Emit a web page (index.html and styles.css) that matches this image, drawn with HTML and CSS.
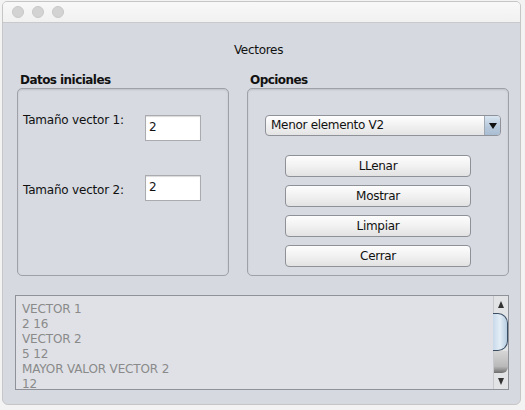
FILE: index.html
```html
<!DOCTYPE html>
<html lang="es">
<head>
<meta charset="utf-8">
<title>Vectores</title>
<link rel="stylesheet" href="styles.css">
</head>
<body>
<div class="window">
  <div class="titlebar">
    <span class="light"></span><span class="light"></span><span class="light"></span>
  </div>
  <div class="content">
    <div class="heading">Vectores</div>
    <div class="panels">
      <section class="group group-left">
        <h2 class="group-title">Datos iniciales</h2>
        <div class="box box-left">
          <div class="field field-a">
            <label class="field-label">Tamaño vector 1:</label>
            <div class="input">2</div>
          </div>
          <div class="field field-b">
            <label class="field-label">Tamaño vector 2:</label>
            <div class="input">2</div>
          </div>
        </div>
      </section>
      <section class="group group-right">
        <h2 class="group-title">Opciones</h2>
        <div class="box box-right">
          <div class="combo">
            <span class="combo-text">Menor elemento V2</span>
            <span class="combo-arrow"><span class="tri-down"></span></span>
          </div>
          <div class="buttons">
            <div class="btn">LLenar</div>
            <div class="btn">Mostrar</div>
            <div class="btn">Limpiar</div>
            <div class="btn">Cerrar</div>
          </div>
        </div>
      </section>
    </div>
    <div class="output">
      <div class="output-text">
        <div>VECTOR 1</div>
        <div>2 16</div>
        <div>VECTOR 2</div>
        <div>5 12</div>
        <div>MAYOR VALOR VECTOR 2</div>
        <div>12</div>
      </div>
      <div class="scrollbar">
        <div class="sb-up"><span class="tri-up"></span></div>
        <div class="sb-thumb"></div>
        <div class="sb-track"></div>
        <div class="sb-down"><span class="tri-down small"></span></div>
      </div>
    </div>
  </div>
</div>
</body>
</html>
```

FILE: styles.css
```css
* { box-sizing: border-box; }
html, body { margin: 0; padding: 0; }
body {
  width: 525px;
  height: 410px;
  background: #f3f3f3;
  font-family: "DejaVu Sans", "Liberation Sans", sans-serif;
  font-size: 12px;
  letter-spacing: -0.3px;
  color: #111;
  overflow: hidden;
  padding: 1px 0 0 2px;
}
.window {
  width: 519px;
  height: 404px;
  border: 1px solid #c6c6c6;
  border-radius: 5px 5px 6px 6px;
  background: #d6d9e0;
  display: flex;
  flex-direction: column;
  overflow: hidden;
}
.titlebar {
  height: 21px;
  flex: none;
  background: linear-gradient(#f8f8f8, #f1f1f1);
  border-bottom: 1px solid #c9c9c9;
  display: flex;
  align-items: center;
  gap: 8px;
  padding-left: 9px;
}
.light {
  width: 12px;
  height: 12px;
  border-radius: 50%;
  background: #d3d3d3;
  border: 1px solid #c8c8c8;
}
.content {
  flex: 1;
  padding: 20px 10px 0 12px;
  display: flex;
  flex-direction: column;
}
.heading {
  line-height: 15px;
  text-align: center;
  margin-left: -8px;
}
.panels {
  margin-top: 15px;
  padding-left: 2px;
  display: flex;
  gap: 18px;
}
.group-left { width: 212px; }
.group-right { width: 262px; }
.group-title {
  margin: 0;
  font-size: 12px;
  font-weight: bold;
  letter-spacing: -0.55px;
  line-height: 15px;
  padding-left: 3px;
}
.box {
  height: 188px;
  border: 1px solid #9ea1a7;
  border-radius: 5px;
  background: #d7dae1;
  box-shadow: inset 0 1px 2px rgba(0,0,0,0.12);
}
.box-left {
  padding: 26px 0 0 5px;
  display: flex;
  flex-direction: column;
  gap: 34px;
}
.field {
  display: flex;
  height: 26px;
}
.field-label {
  width: 122px;
  line-height: 15px;
  letter-spacing: -0.2px;
}
.field-a .field-label { align-self: flex-start; margin-top: -2px; }
.field-b .field-label { align-self: flex-end; margin-bottom: 3px; }
.input {
  width: 56px;
  height: 26px;
  background: #fff;
  border: 1px solid #a9abae;
  box-shadow: inset 0 1px 1px rgba(0,0,0,0.15);
  padding: 4px 0 0 3px;
  line-height: 15px;
}
.box-right {
  padding: 26px 7px 0 17px;
}
.combo {
  height: 21px;
  display: flex;
  border: 1px solid #8f9298;
  border-radius: 4px;
  background: linear-gradient(#ffffff, #f1f1f1 50%, #e4e4e4);
  overflow: hidden;
}
.combo-text {
  flex: 1;
  padding-left: 5px;
  line-height: 18px;
}
.combo-arrow {
  width: 16px;
  border-left: 1px solid #9fa8b3;
  background: linear-gradient(#d9e5f1, #b7c9dc 55%, #a9bdd2);
  display: flex;
  align-items: center;
  justify-content: center;
}
.tri-down {
  width: 0;
  height: 0;
  border-left: 4px solid transparent;
  border-right: 4px solid transparent;
  border-top: 6px solid #111;
}
.tri-down.small {
  border-left-width: 3px;
  border-right-width: 3px;
  border-top: 7px solid #333;
}
.tri-up {
  width: 0;
  height: 0;
  border-left: 3px solid transparent;
  border-right: 3px solid transparent;
  border-bottom: 7px solid #333;
}
.buttons {
  margin: 19px 0 0 20px;
  width: 186px;
  display: flex;
  flex-direction: column;
  gap: 8px;
}
.btn {
  height: 22px;
  border: 1px solid #8e9197;
  border-radius: 4px;
  background: linear-gradient(#fdfdfd, #f1f1f1 50%, #e2e2e2);
  text-align: center;
  line-height: 20px;
}
.output {
  margin: 19px 1px 0 0;
  height: 95px;
  border: 1px solid #8f9298;
  background: #dfe1e6;
  display: flex;
  overflow: hidden;
}
.output-text {
  flex: 1;
  padding: 6px 0 0 6px;
  line-height: 15px;
  letter-spacing: -0.15px;
  color: #8a8a8a;
  overflow: hidden;
}
.scrollbar {
  width: 15px;
  display: flex;
  flex-direction: column;
  background: #e2e3e5;
  border-left: 1px solid #c8c9cc;
}
.sb-up {
  height: 17px;
  display: flex;
  justify-content: center;
  align-items: center;
}
.sb-thumb {
  height: 38px;
  margin-left: -1px;
  border: 1px solid #3b4d63;
  border-left: none;
  border-radius: 0 10px 10px 0;
  background: linear-gradient(90deg, #c8d9ea, #e3edf6 50%, #b8cde2);
}
.sb-track {
  height: 22px;
  background: linear-gradient(#d6d6d6, #b9b9b9 70%, #6e6e6e);
  border-radius: 0 0 6px 0;
}
.sb-down {
  flex: 1;
  display: flex;
  justify-content: center;
  align-items: center;
}
```
